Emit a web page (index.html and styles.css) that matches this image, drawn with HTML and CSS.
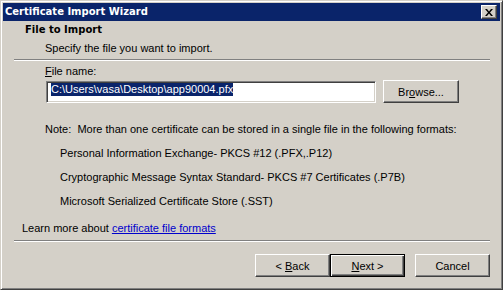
FILE: index.html
```html
<!DOCTYPE html>
<html lang="en">
<head>
    <meta charset="UTF-8">
    <meta name="viewport" content="width=device-width, initial-scale=1.0">
    <title>Certificate Import Wizard</title>
    <link rel="stylesheet" href="styles.css">
</head>
<body>
    <div class="window">
        <div class="titlebar">
            <span class="title">Certificate Import Wizard</span>
            <button class="close" aria-label="Close">
                <svg width="8" height="7" viewBox="0 0 8 7">
                    <path d="M0 0h2l2 2.5L6 0h2L5 3.5 8 7H6L4 4.5 2 7H0l3-3.5z" fill="#000"/>
                </svg>
            </button>
        </div>

        <div class="header">
            <div class="header-title">File to Import</div>
            <div class="header-sub">Specify the file you want to import.</div>
        </div>
        <div class="sep"></div>

        <div class="content">
            <label class="field-label"><u>F</u>ile name:</label>
            <div class="file-row">
                <div class="textbox"><span class="selected">C:\Users\vasa\Desktop\app90004.pfx</span></div>
                <button class="btn browse">Br<u>o</u>wse...</button>
            </div>
            <p class="note">Note:&nbsp; More than one certificate can be stored in a single file in the following formats:</p>
            <ul class="formats">
                <li>Personal Information Exchange- PKCS #12 (.PFX,.P12)</li>
                <li>Cryptographic Message Syntax Standard- PKCS #7 Certificates (.P7B)</li>
                <li>Microsoft Serialized Certificate Store (.SST)</li>
            </ul>
            <p class="learn">Learn more about <a href="#">certificate file formats</a></p>
        </div>
        <div class="sep"></div>

        <div class="actions">
            <button class="btn">&lt; <u>B</u>ack</button>
            <button class="btn default"><u>N</u>ext &gt;</button>
            <button class="btn cancel">Cancel</button>
        </div>
    </div>
</body>
</html>
```

FILE: styles.css
```css
body {
    margin: 0;
    padding: 0;
    font-family: "Liberation Sans", Arial, sans-serif;
    font-size: 11px;
    color: #000;
    background-color: #d4d0c8;
}
.window {
    width: 503px;
    height: 290px;
    box-sizing: border-box;
    border: 1px solid;
    border-color: #d4d0c8 #404040 #404040 #d4d0c8;
    box-shadow: inset 1px 1px #fff, inset -1px -1px #808080;
    padding: 2px;
    background-color: #d4d0c8;
    display: flex;
    flex-direction: column;
}
.titlebar {
    height: 18px;
    background-color: #0a246a;
    color: white;
    display: flex;
    align-items: center;
    justify-content: space-between;
    padding: 0 3px 0 2px;
}
.title {
    font-family: "DejaVu Sans", Verdana, sans-serif;
    font-weight: bold;
    font-size: 10px;
    line-height: 18px;
}
.close {
    width: 16px;
    height: 14px;
    box-sizing: border-box;
    padding: 0;
    border: 1px solid;
    border-color: #fff #404040 #404040 #fff;
    box-shadow: inset -1px -1px #808080;
    background-color: #d4d0c8;
    display: flex;
    align-items: center;
    justify-content: center;
}
.close svg {
    display: block;
    margin-left: -1px;
}
.header {
    padding: 2px 0 4px 0;
}
.header-title {
    font-family: "DejaVu Sans", Verdana, sans-serif;
    font-weight: bold;
    font-size: 10px;
    line-height: 13px;
    padding-left: 22px;
}
.header-sub {
    line-height: 13px;
    margin-top: 6px;
    padding-left: 42px;
}
.sep {
    margin: 0 10px 0 11px;
    border-top: 1px solid #808080;
    border-bottom: 1px solid #fff;
    height: 0;
}
.content {
    height: 179px;
    padding-top: 4px;
    box-sizing: border-box;
}
.field-label {
    display: block;
    line-height: 13px;
    padding-left: 42px;
}
.file-row {
    display: flex;
    align-items: flex-start;
    gap: 7px;
    margin-top: 2px;
    padding-left: 43px;
}
.textbox {
    width: 330px;
    height: 22px;
    box-sizing: border-box;
    margin-top: 1px;
    border: 1px solid;
    border-color: #808080 #fff #fff #808080;
    box-shadow: inset 1px 1px #404040, inset -1px -1px #d4d0c8;
    background-color: white;
    padding: 1px 0 0 4px;
}
.selected {
    display: inline-block;
    line-height: 13px;
    background-color: #0a246a;
    color: white;
    white-space: nowrap;
}
.btn {
    width: 75px;
    height: 23px;
    box-sizing: border-box;
    padding: 0;
    border: 1px solid;
    border-color: #fff #404040 #404040 #fff;
    box-shadow: inset -1px -1px #808080;
    background-color: #d4d0c8;
    font-family: "Liberation Sans", Arial, sans-serif;
    font-size: 11px;
    color: #000;
}
.browse {
    width: 76px;
}
.btn.default {
    border-color: #000;
    box-shadow: inset 1px 1px #fff, inset -1px -1px #404040, inset -2px -2px #808080;
}
.note {
    margin: 20px 0 0 0;
    line-height: 13px;
    padding-left: 42px;
}
.formats {
    list-style-type: none;
    margin: 0;
    padding: 0 0 0 57px;
}
.formats li {
    line-height: 13px;
    margin-top: 11px;
}
.learn {
    margin: 14px 0 0 0;
    line-height: 13px;
    padding-left: 19px;
}
.learn a {
    color: #0000cc;
}
.actions {
    display: flex;
    justify-content: flex-end;
    padding: 12px 10px 0 0;
}
.actions .cancel {
    margin-left: 10px;
}
```
